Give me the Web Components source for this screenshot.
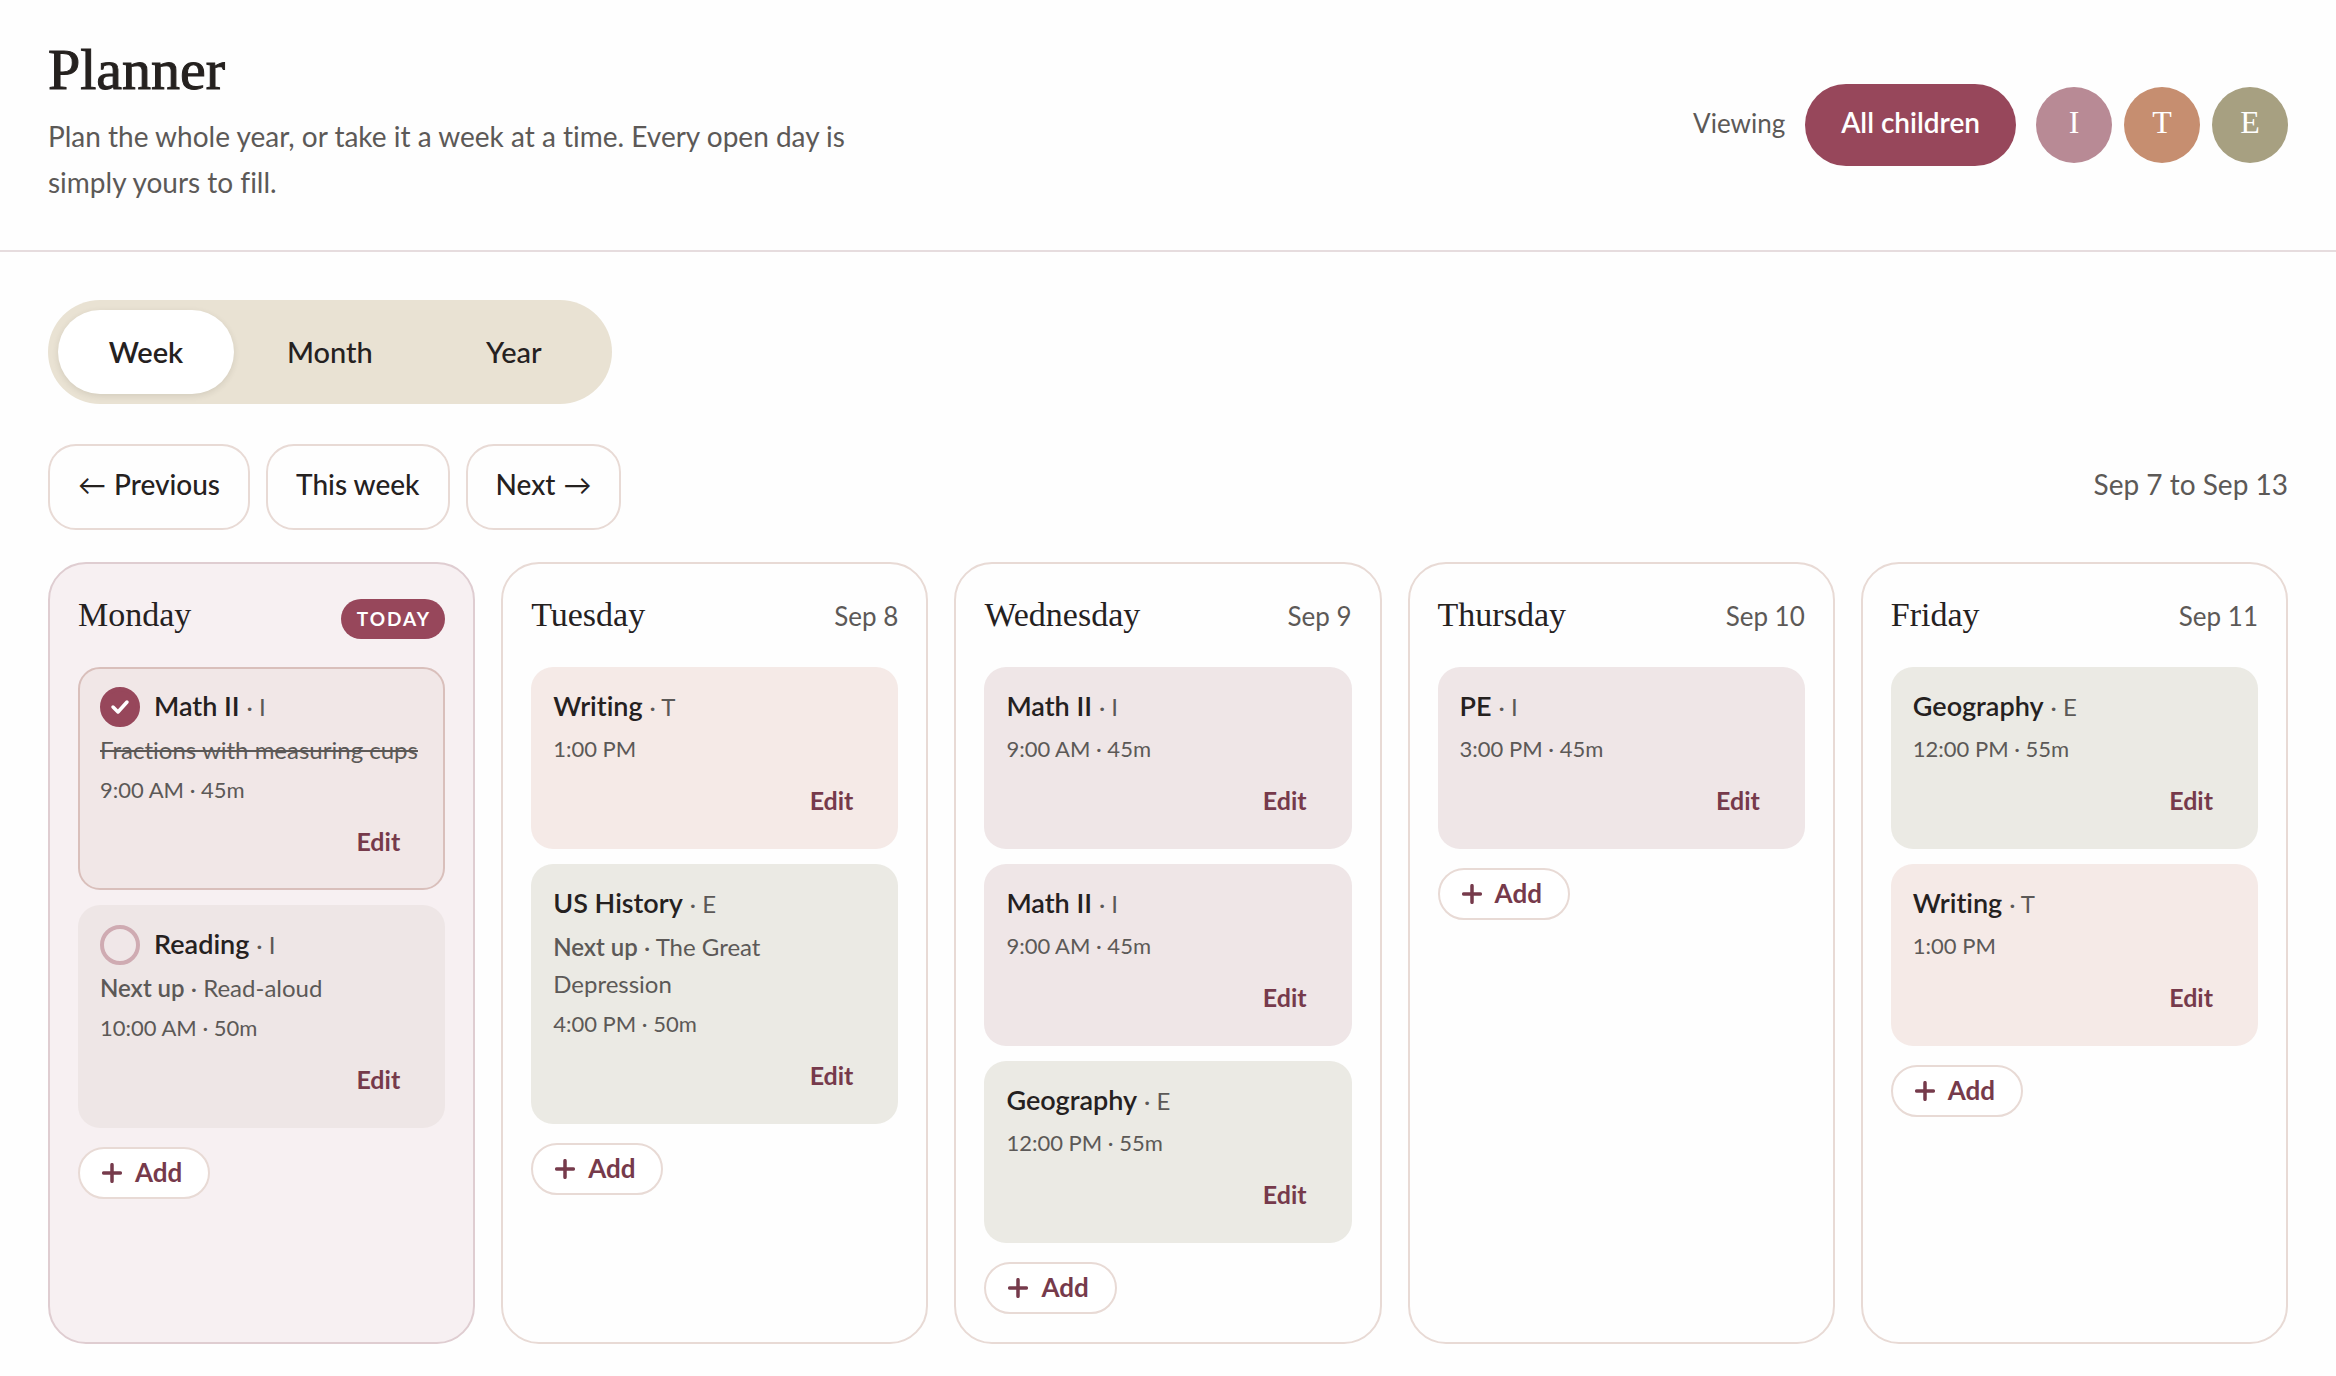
<!DOCTYPE html>
<html lang="en">
<head>
<meta charset="utf-8">
<title>Planner</title>
<style>
  :root {
    --ink: #25211f;
    --muted: #5c5957;
    --accent: #97475b;
    --accent-deep: #763a4b;
    --line: #e8dad5;
    --serif: "Liberation Serif", "Times New Roman", serif;
  }
  body {
    margin: 0;
    background: #fefefe;
    color: var(--ink);
    font-family: Lato, "Open Sans", sans-serif;
    font-size: 28px;
    font-variant-ligatures: none;
  }
  main { display: grid; gap: 32px; padding: 48px 48px 34px; }
  view-tabs { margin-bottom: 8px; }
</style>
</head>
<body>
<planner-header heading="Planner">
  Plan the whole year, or take it a week at a time. Every open day is simply yours to fill.
  <child-filter slot="tools"></child-filter>
</planner-header>
<main>
  <view-tabs></view-tabs>
  <week-nav>Sep 7 to Sep 13</week-nav>
  <week-board>
    <day-column name="Monday" today>
      <lesson-card subject="Math II" child="I" time="9:00 AM · 45m" tone="rose" check="done">Fractions with measuring cups</lesson-card>
      <lesson-card subject="Reading" child="I" time="10:00 AM · 50m" tone="mauve" check="open" next>Read-aloud</lesson-card>
    </day-column>
    <day-column name="Tuesday" date="Sep 8">
      <lesson-card subject="Writing" child="T" time="1:00 PM" tone="peach"></lesson-card>
      <lesson-card subject="US History" child="E" time="4:00 PM · 50m" tone="sage" next>The Great Depression</lesson-card>
    </day-column>
    <day-column name="Wednesday" date="Sep 9">
      <lesson-card subject="Math II" child="I" time="9:00 AM · 45m" tone="pink"></lesson-card>
      <lesson-card subject="Math II" child="I" time="9:00 AM · 45m" tone="pink"></lesson-card>
      <lesson-card subject="Geography" child="E" time="12:00 PM · 55m" tone="sage"></lesson-card>
    </day-column>
    <day-column name="Thursday" date="Sep 10">
      <lesson-card subject="PE" child="I" time="3:00 PM · 45m" tone="pink"></lesson-card>
    </day-column>
    <day-column name="Friday" date="Sep 11">
      <lesson-card subject="Geography" child="E" time="12:00 PM · 55m" tone="sage"></lesson-card>
      <lesson-card subject="Writing" child="T" time="1:00 PM" tone="peach"></lesson-card>
    </day-column>
  </week-board>
</main>
<script>
const reset = `
  *, *::before, *::after { box-sizing: border-box; }
  h1, h2, h3, p { margin: 0; font-weight: 400; }
  button { font: inherit; font-variant-ligatures: none; color: inherit; border: 0; background: none; padding: 0; margin: 0; cursor: pointer; }
`;

class BaseElement extends HTMLElement {
  connectedCallback() {
    if (this.shadowRoot) return;
    const root = this.attachShadow({ mode: 'open' });
    root.innerHTML = `<style>${reset}${this.css()}</style>${this.html()}`;
  }
  at(name) { return this.getAttribute(name) || ''; }
}

customElements.define('planner-header', class extends BaseElement {
  css() { return `
    :host { display: block; border-bottom: 2px solid #e6dcde; }
    header { display: flex; align-items: center; justify-content: space-between; gap: 48px; padding: 0 48px; }
    .intro { display: grid; gap: 11px; padding: 38px 0 45px; max-width: 832px; }
    h1 { font: 500 58px/64px var(--serif); -webkit-text-stroke: 1px currentColor; }
    p { font-size: 28px; line-height: 46px; color: var(--muted); }`; }
  html() { return `<header><div class="intro"><h1>${this.at('heading')}</h1><p><slot></slot></p></div><slot name="tools"></slot></header>`; }
});

customElements.define('child-filter', class extends BaseElement {
  css() { return `
    :host { display: flex; align-items: center; gap: 20px; }
    .label { font-size: 26px; color: var(--muted); padding-bottom: 4px; }
    .all { height: 82px; padding: 0 36px 6px; border-radius: 41px; background: var(--accent); color: #fff; font-weight: 600; }
    .kids { display: flex; gap: 12px; }
    .kids button { width: 76px; height: 76px; padding-bottom: 6px; border-radius: 50%; color: #fff; font: 32px var(--serif); }
    .i { background: #b88a95; } .t { background: #c68e70; } .e { background: #a7a081; }`; }
  html() { return `<span class="label">Viewing</span><button class="all">All children</button>
    <div class="kids"><button class="i">I</button><button class="t">T</button><button class="e">E</button></div>`; }
});

customElements.define('view-tabs', class extends BaseElement {
  css() { return `
    :host { display: flex; }
    nav { display: flex; gap: 3px; padding: 10px; border-radius: 52px; background: #e9e2d3; }
    button { min-width: 176px; height: 84px; padding: 0 50px 2px; border-radius: 42px; font-size: 29px; font-weight: 500; }
    .on { background: #fff; font-weight: 600; box-shadow: 0 2px 6px rgba(60, 50, 30, .12); }`; }
  html() { return `<nav><button class="on" aria-pressed="true">Week</button><button>Month</button><button>Year</button></nav>`; }
});

customElements.define('week-nav', class extends BaseElement {
  css() { return `
    :host { display: flex; align-items: center; justify-content: space-between; }
    .group { display: flex; gap: 16px; }
    button { display: flex; align-items: center; gap: 8px; height: 86px; padding: 0 28px 6px; border: 2px solid var(--line); border-radius: 28px; font-weight: 500; }
    i { font-style: normal; font-weight: 400; }
    .range { color: var(--muted); padding-bottom: 6px; }`; }
  html() { return `<div class="group"><button><i>←</i>Previous</button><button>This week</button><button>Next<i>→</i></button></div>
    <span class="range"><slot></slot></span>`; }
});

customElements.define('week-board', class extends BaseElement {
  css() { return `:host { display: grid; grid-template-columns: repeat(5, minmax(0, 1fr)); gap: 26px; }`; }
  html() { return `<slot></slot>`; }
});

customElements.define('day-column', class extends BaseElement {
  css() { return `
    :host { display: block; padding: 28px; border: 2px solid var(--line); border-radius: 38px; }
    :host([today]) { background: #f7f0f2; border-color: #dfcdd1; }
    header { display: flex; align-items: baseline; justify-content: space-between; height: 46px; margin-bottom: 29px; }
    h2 { font: 500 34px/46px var(--serif); }
    .date { font-size: 26px; line-height: 40px; color: var(--muted); }
    .today { padding: 0 14px 0 16px; border-radius: 20px; background: var(--accent); color: #fff;
      font-size: 19px; line-height: 40px; font-weight: 700; letter-spacing: 2px; }
    .cards { display: grid; gap: 15px; margin-bottom: 19px; }`; }
  html() {
    const mark = this.hasAttribute('today') ? '<span class="today">TODAY</span>' : `<span class="date">${this.at('date')}</span>`;
    return `<header><h2>${this.at('name')}</h2>${mark}</header><div class="cards"><slot></slot></div><add-button></add-button>`;
  }
});

customElements.define('add-button', class extends BaseElement {
  css() { return `
    :host { display: block; }
    button { display: flex; align-items: center; gap: 13px; height: 52px; padding: 0 26px 0 22px; border: 2px solid var(--line);
      border-radius: 26px; background: #fff; color: var(--accent-deep); font-size: 26px; font-weight: 700; }
    span { padding-bottom: 2px; }
    svg { width: 20px; height: 20px; fill: none; stroke: currentColor; stroke-width: 3.5; stroke-linecap: round; }`; }
  html() { return `<button><svg viewBox="0 0 20 20" aria-hidden="true"><path d="M10 1.7v16.6M1.7 10h16.6"/></svg><span>Add</span></button>`; }
});

customElements.define('lesson-card', class extends BaseElement {
  css() { return `
    :host { display: flex; flex-direction: column; padding: 18px 20px 20px; border: 2px solid transparent; border-radius: 22px; color: var(--muted); }
    :host([tone=rose]) { background: #f1e7e7; border-color: #d9bfbb; }
    :host([tone=mauve]) { background: #eee6e6; }
    :host([tone=pink]) { background: #efe6e7; }
    :host([tone=peach]) { background: #f5eae7; }
    :host([tone=sage]) { background: #ebeae4; }
    .top { display: flex; gap: 14px; height: 40px; margin-bottom: 4px; }
    h3 { font-size: 27px; line-height: 37px; }
    h3 b { font-weight: 600; color: var(--ink); }
    h3 span { font-size: 24px; line-height: 24px; }
    .check { display: grid; width: 40px; height: 40px; }
    .check > * { grid-area: 1 / 1; }
    input { appearance: none; width: 40px; height: 40px; margin: 0; border: 4px solid #cfabb2; border-radius: 50%; background: #f0e7e8; }
    input:checked { border-color: var(--accent); background: var(--accent); }
    svg { width: 40px; height: 40px; fill: none; stroke: #fff; stroke-width: 3.5; stroke-linecap: round; stroke-linejoin: round; pointer-events: none; z-index: 1; }
    .desc { font-size: 24px; line-height: 37px; margin-bottom: 4px; }
    .desc b { font-weight: 600; }
    .desc.done { text-decoration: line-through; text-decoration-thickness: 2px; }
    .time { font-size: 22px; line-height: 36px; margin-bottom: 12px; }
    .edit { align-self: flex-end; height: 48px; padding: 0 23px 6px; color: var(--accent-deep); font-size: 25px; font-weight: 700; }`; }
  html() {
    const state = this.at('check');
    const done = state === 'done';
    const box = state ? `<label class="check"><input type="checkbox" aria-label="${this.at('subject')} done"${done ? ' checked' : ''}>${
      done ? '<svg viewBox="0 0 40 40" aria-hidden="true"><path d="M13 20l5 5 9-10"/></svg>' : ''}</label>` : '';
    const text = this.textContent.trim();
    const desc = text ? `<p class="desc${done ? ' done' : ''}">${this.hasAttribute('next') ? '<b>Next up</b> · ' : ''}<slot></slot></p>` : '';
    return `<div class="top">${box}<h3><b>${this.at('subject')}</b> <span>· ${this.at('child')}</span></h3></div>${desc}
      <p class="time">${this.at('time')}</p><button class="edit">Edit</button>`;
  }
});
</script>
</body>
</html>
